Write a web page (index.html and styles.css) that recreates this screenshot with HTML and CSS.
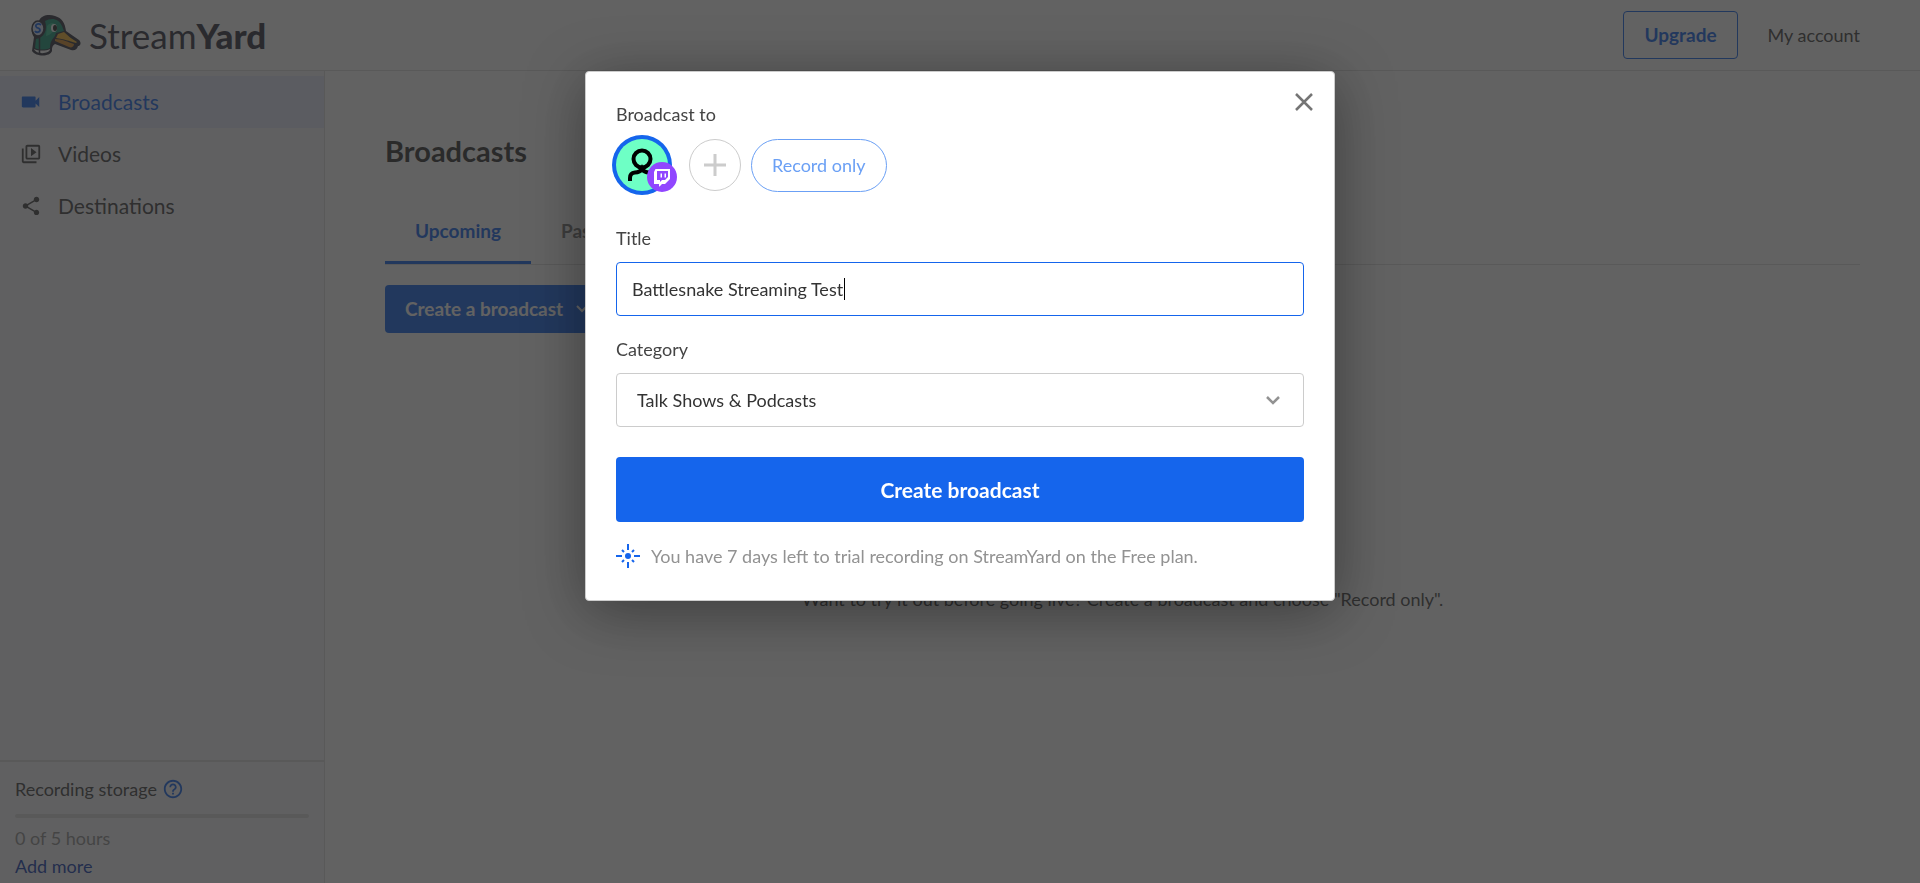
FILE: index.html
```html
<!DOCTYPE html>
<html lang="en">
<head>
<meta charset="utf-8">
<title>StreamYard</title>
<link rel="stylesheet" href="styles.css">
</head>
<body>
<div class="app">
  <header class="header">
    <a class="brand" href="#">
      <svg class="brand-duck" viewBox="0 0 50 42" width="50" height="42" aria-hidden="true">
        <path d="M8 7C10 1 18 0 24 2c7 2 10 7 11 15l13 9c3 3 1 6-1 6-1 4-4 5-7 4l-16-6c-3 2-3 4-3 7-2 6-16 6-20 0l2-14C-1 18 0 9 8 7Z" fill="#30323f"/>
        <path d="M14 7c7-4 14-2 17 5l2 5-8 2c-1 4-3 5-4 7-2 3-2 6-2 8-4 2-11 2-15 0l1-9c8-1 12-9 9-18Z" fill="#189678"/>
        <path d="M16 12c5-5 9-3 8 2-1 3-4 7-9 8Z" fill="#35bf91"/>
        <path d="M27 20l6-2c4 4 8 7 13 10l-1 1c-7-2-12-4-20-5Z" fill="#f7b52c"/>
        <path d="M24 25c7 0 13 3 19 5 0 3-3 4-5 3l-14-6Z" fill="#d98b2b"/>
        <path d="M3 35c4 2 12 2 16 0 0 5-14 6-16 0Z" fill="#fff"/>
        <ellipse cx="23" cy="14" rx="3" ry="4" fill="#fff"/>
        <ellipse cx="24" cy="14" rx="2" ry="3" fill="#222"/>
        <ellipse cx="7" cy="14.500" rx="6" ry="7.500" fill="#dbe6fb" stroke="#30323f" stroke-width="1.500"/>
        <path d="M10 11c-2-2-6-1-5 1.500s4 1 4 3.500-4 3-5 1" fill="none" stroke="#1565ec" stroke-width="1.800"/>
        <path d="M8.500 22v17" stroke="#30323f" stroke-width="1.500"/>
      </svg>
      <span class="brand-name">Stream<b>Yard</b></span>
    </a>
    <div class="header-actions">
      <button class="upgrade" type="button">Upgrade</button>
      <a class="account" href="#">My account</a>
    </div>
  </header>
  <div class="body">
    <aside class="sidebar">
      <nav class="nav">
        <a class="nav-item nav-item-active" href="#">
          <svg viewBox="0 0 24 24" width="22" height="22" fill="currentColor" aria-hidden="true"><path d="M17 10.500V7c0-.55-.45-1-1-1H3c-.55 0-1 .45-1 1v10c0 .55.45 1 1 1h13c.55 0 1-.45 1-1v-3.500l4 4v-11l-4 4z"/></svg>
          Broadcasts</a>
        <a class="nav-item" href="#">
          <svg viewBox="0 0 24 24" width="22" height="22" fill="currentColor" aria-hidden="true"><path d="M4 6H2v14c0 1.100.9 2 2 2h14v-2H4V6zm16-4H8c-1.100 0-2 .9-2 2v12c0 1.100.9 2 2 2h12c1.100 0 2-.9 2-2V4c0-1.100-.9-2-2-2zm0 14H8V4h12v12zM12 5.500v9l6-4.500z"/></svg>
          Videos</a>
        <a class="nav-item" href="#">
          <svg viewBox="0 0 24 24" width="22" height="22" fill="currentColor" aria-hidden="true"><path d="M18 16.080c-.76 0-1.440.3-1.960.77L8.910 12.700c.05-.23.09-.46.09-.7s-.04-.47-.09-.7l7.050-4.110c.54.5 1.250.81 2.040.81 1.660 0 3-1.340 3-3s-1.340-3-3-3-3 1.340-3 3c0 .24.040.47.090.7L8.040 9.810C7.500 9.310 6.790 9 6 9c-1.660 0-3 1.340-3 3s1.340 3 3 3c.79 0 1.500-.31 2.040-.81l7.120 4.160c-.05.21-.08.43-.08.65 0 1.610 1.310 2.920 2.920 2.920s2.920-1.310 2.920-2.920-1.310-2.920-2.920-2.920z"/></svg>
          Destinations</a>
      </nav>
      <section class="storage">
        <p class="storage-title">Recording storage
          <svg viewBox="0 0 24 24" width="22" height="22" fill="currentColor" aria-hidden="true"><path d="M11 18h2v-2h-2v2zm1-16C6.480 2 2 6.480 2 12s4.480 10 10 10 10-4.480 10-10S17.520 2 12 2zm0 18c-4.410 0-8-3.590-8-8s3.590-8 8-8 8 3.590 8 8-3.590 8-8 8zm0-14c-2.210 0-4 1.790-4 4h2c0-1.100.9-2 2-2s2 .9 2 2c0 2-3 1.750-3 5h2c0-2.250 3-2.500 3-5 0-2.210-1.790-4-4-4z"/></svg>
        </p>
        <div class="storage-bar"></div>
        <p class="storage-used">0 of 5 hours</p>
        <a class="storage-link" href="#">Add more</a>
      </section>
    </aside>
    <main class="main">
      <h1 class="page-title">Broadcasts</h1>
      <div class="tabs">
        <button class="tab tab-active" type="button">Upcoming</button>
        <button class="tab" type="button">Past</button>
      </div>
      <button class="create" type="button">Create a broadcast
        <svg viewBox="0 0 12 8" width="12" height="8" aria-hidden="true"><path d="M1 1l5 5 5-5" fill="none" stroke="currentColor" stroke-width="2"/></svg>
      </button>
      <p class="empty">Want to try it out before going live? Create a broadcast and choose "Record only".</p>
    </main>
  </div>
</div>

<div class="overlay">
  <form class="modal" role="dialog" aria-label="Create broadcast">
    <button class="close" type="button" aria-label="Close">
      <svg viewBox="0 0 18 18" width="18" height="18" aria-hidden="true"><path d="M1 1l16 16M17 1L1 17" stroke="currentColor" stroke-width="2.500"/></svg>
    </button>
    <p class="label">Broadcast to</p>
    <div class="targets">
      <button class="avatar" type="button" aria-label="Twitch destination">
        <svg class="avatar-person" viewBox="0 0 52 52" width="52" height="52" fill="none" stroke="#000" stroke-width="4" aria-hidden="true"><circle cx="26" cy="20" r="8.500"/><path d="M14 42v-3q0-5 5-5.500 5 0 7-4 2 4 7 4 5 .5 5 5.500v3"/></svg>
        <svg class="avatar-badge" viewBox="0 0 30 30" width="30" height="30" aria-hidden="true"><circle cx="15" cy="15" r="15" fill="#9146ff"/><path fill="#fff" fill-rule="evenodd" d="M8.500 7H23v10l-5 5h-3l-2.500 2.500H12V22H7V10zM10 9v9h3v2l2-2h3l3-3V9zM13.500 11.500h1.500v4h-1.500zM17.500 11.500h1.500v4h-1.500z"/></svg>
      </button>
      <button class="add" type="button" aria-label="Add destination">
        <svg viewBox="0 0 22 22" width="22" height="22" aria-hidden="true"><path d="M11 0v22M0 11h22" stroke="currentColor" stroke-width="3"/></svg>
      </button>
      <button class="record" type="button">Record only</button>
    </div>
    <label class="label" for="title">Title</label>
    <div class="input-wrap">
      <input class="field field-active" id="title" type="text" value="Battlesnake Streaming Test">
      <span class="caret"></span>
    </div>
    <label class="label" for="category">Category</label>
    <div class="select-wrap">
      <select class="field select" id="category"><option>Talk Shows &amp; Podcasts</option></select>
      <svg class="select-arrow" viewBox="0 0 14 9" width="14" height="9" aria-hidden="true"><path d="M1 1l6 6 6-6" fill="none" stroke="currentColor" stroke-width="2.500"/></svg>
    </div>
    <button class="submit" type="submit">Create broadcast</button>
    <p class="trial">
      <svg viewBox="0 0 24 24" width="24" height="24" fill="none" stroke="#1565ec" stroke-width="2" aria-hidden="true"><circle cx="12" cy="12" r="3" fill="#1565ec" stroke="none"/><path d="M12 0v6M12 18v6M0 12h6M18 12h6M6 6l2 2M16 16l2 2M18 6l-2 2M8 16l-2 2"/></svg>
      You have 7 days left to trial recording on StreamYard on the Free plan.</p>
  </form>
</div>
</body>
</html>
```
FILE: styles.css
```css
* { box-sizing: border-box; }

body {
  margin: 0;
  font-family: Lato, "Open Sans", sans-serif;
  font-size: 18px;
  line-height: 24px;
  color: #444;
  background: #fff;
}

button, input, select { font: inherit; color: inherit; margin: 0; cursor: pointer; }
a { color: inherit; text-decoration: none; }
p, h1 { margin: 0; }
svg { flex: none; display: block; }

.app { height: 100vh; display: flex; flex-direction: column; }

.header {
  height: 71px;
  flex: none;
  display: flex;
  align-items: center;
  justify-content: space-between;
  padding: 0 60px 0 31px;
  border-bottom: 1px solid #ddd;
}
.brand { display: flex; align-items: center; gap: 8px; color: #30323f; }
.brand-name { font-size: 35px; line-height: 42px; font-weight: 400; }
.brand-name b { font-weight: 900; }
.header-actions { display: flex; align-items: center; gap: 30px; }
.upgrade {
  height: 48px;
  padding: 0 20px;
  border: 1px solid #1565ec;
  border-radius: 4px;
  background: none;
  color: #1565ec;
  font-size: 19px;
  font-weight: 700;
}

.body { flex: 1; display: flex; min-height: 0; }
.sidebar {
  width: 325px;
  flex: none;
  display: flex;
  flex-direction: column;
  justify-content: space-between;
  padding-top: 5px;
  background: #f8f8fc;
  border-right: 1px solid #ddd;
}
.nav-item { display: flex; align-items: center; gap: 16px; height: 52px; padding: 0 20px; font-size: 21px; }
.nav-item-active { background: #e4e9fa; color: #1565ec; }

.storage { padding: 15px 15px 5px; border-top: 2px solid #ddd; }
.storage-title { display: flex; align-items: center; gap: 5px; }
.storage-title svg { color: #1565ec; }
.storage-bar { height: 4px; margin: 13px 0 8px; border-radius: 2px; background: #ddd; }
.storage-used { color: #929292; }
.storage-link { display: block; margin-top: 4px; color: #1540b0; }

.main { flex: 1; padding: 60px 60px 0; }
.page-title { font-size: 29px; line-height: 40px; font-weight: 700; color: #333; }
.tabs { display: flex; margin-top: 30px; border-bottom: 1px solid #ddd; }
.tab { height: 63px; padding: 0 30px; border: 0; border-bottom: 3px solid transparent; background: none; color: #777; font-size: 19px; font-weight: 700; }
.tab-active { border-color: #1565ec; color: #1565ec; }
.create {
  display: flex;
  align-items: center;
  gap: 13px;
  height: 48px;
  margin-top: 20px;
  padding: 0 20px;
  border: 0;
  border-radius: 4px;
  background: #1565ec;
  color: #fff;
  font-size: 19px;
  font-weight: 700;
}
.empty { margin-top: 254px; text-align: center; }

.overlay {
  position: fixed;
  inset: 0;
  display: flex;
  justify-content: center;
  align-items: flex-start;
  padding-top: 71px;
  background: rgba(40, 40, 40, 0.73);
}
.modal {
  position: relative;
  width: 750px;
  padding: 30px 30px 32px;
  border: 1px solid #ccc;
  border-radius: 4px;
  background: #fff;
  box-shadow: 0 10px 60px rgba(0, 0, 0, 0.4);
}
.close { position: absolute; top: 20px; right: 19px; padding: 0; width: 20px; height: 20px; border: 0; background: none; color: #757575; }
.label { display: block; margin-bottom: 12px; }

.targets { display: flex; align-items: center; height: 54px; margin-bottom: 34px; }
.avatar { position: relative; width: 52px; height: 52px; padding: 0; border: 0; border-radius: 50%; background: #6effc5; box-shadow: 0 0 0 4px #1565ec; }
.avatar-badge { position: absolute; right: -9px; bottom: -1px; }
.add { display: grid; place-items: center; width: 52px; height: 52px; margin-left: 21px; padding: 0; border: 1px solid #ccc; border-radius: 50%; background: none; color: #ccc; }
.record { height: 53px; margin-left: 10px; padding: 0 20px; border: 1px solid #6ba0f5; border-radius: 27px; background: none; color: #6ba0f5; }

.field { display: block; width: 100%; height: 54px; padding: 0 15px; border: 1px solid #ccc; border-radius: 4px; background: #fff; color: #333; outline: 0; }
.field-active { border-color: #1565ec; cursor: text; caret-color: transparent; }
.input-wrap { position: relative; margin-bottom: 21px; }
.caret { position: absolute; left: 228px; top: 16px; width: 1px; height: 22px; background: #000; pointer-events: none; }
.select-wrap { position: relative; }
.select { appearance: none; padding: 0 20px; }
.select-arrow { position: absolute; right: 24px; top: 23px; color: #929292; pointer-events: none; }
.submit { display: block; width: 100%; height: 65px; margin-top: 30px; border: 0; border-radius: 4px; background: #1565ec; color: #fff; font-size: 21px; font-weight: 700; }
.trial { display: flex; align-items: center; gap: 11px; margin-top: 22px; color: #929292; }
```
